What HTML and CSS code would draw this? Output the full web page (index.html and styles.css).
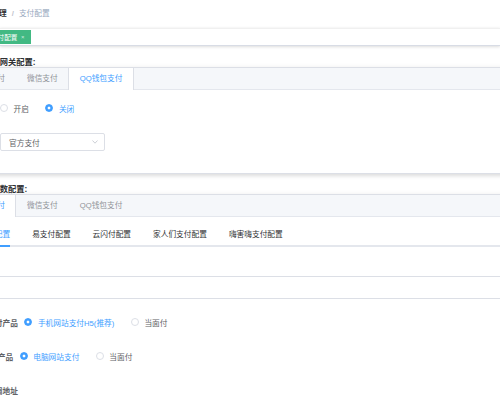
FILE: index.html
```html
<!DOCTYPE html>
<html lang="zh-CN">
<head>
  <meta charset="UTF-8" />
  <title>支付配置</title>
  <link rel="stylesheet" href="styles.css">
</head>
<body>
  <div class="navbar">
    <div class="breadcrumb">
      <span class="crumb-link">支付管理</span><span class="crumb-sep">/</span><span class="crumb-current">支付配置</span>
    </div>
  </div>
  <div class="tags-view">
    <span class="tag">支付配置<span class="tag-close">×</span></span>
  </div>

  <div class="app-main">
    <!-- 网关 -->
    <div class="section-title">第三方网关配置:</div>
    <div class="tabs-card">
      <div class="tabs-head">
        <div class="tab-item">支付宝支付</div>
        <div class="tab-item">微信支付</div>
        <div class="tab-item active">QQ钱包支付</div>
      </div>
      <div class="tabs-body">
        <div class="form-row">
          <div class="form-label fixed">状态</div>
          <label class="radio"><span class="radio-dot"></span><span class="radio-text">开启</span></label>
          <label class="radio checked"><span class="radio-dot"></span><span class="radio-text">关闭</span></label>
        </div>
        <div class="form-row">
          <div class="form-label fixed">通道</div>
          <div class="select">
            <span>官方支付</span>
            <svg width="6" height="4" viewBox="0 0 6 4"><polyline points="0.5,0.5 3,3.2 5.5,0.5" fill="none" stroke="#c0c4cc" stroke-width="0.8"/></svg>
          </div>
        </div>
      </div>
    </div>

    <!-- 参数 -->
    <div class="section-title second">支付参数配置:</div>
    <div class="tabs-card">
      <div class="tabs-head">
        <div class="tab-item active">支付宝支付</div>
        <div class="tab-item">微信支付</div>
        <div class="tab-item">QQ钱包支付</div>
      </div>
      <div class="tabs-body">
        <div class="line-tabs">
          <div class="line-tab active"><span>官方支付配置</span></div>
          <div class="line-tab"><span>易支付配置</span></div>
          <div class="line-tab"><span>云闪付配置</span></div>
          <div class="line-tab"><span>家人们支付配置</span></div>
          <div class="line-tab"><span>嗨害嗨支付配置</span></div>
        </div>
        <div class="wide-input"></div>
        <div class="form-row param-row">
          <div class="form-label">手机端支付产品</div>
          <label class="radio checked"><span class="radio-dot"></span><span class="radio-text">手机网站支付H5(推荐)</span></label>
          <label class="radio"><span class="radio-dot"></span><span class="radio-text">当面付</span></label>
        </div>
        <div class="form-row param-row">
          <div class="form-label">PC端支付产品</div>
          <label class="radio checked"><span class="radio-dot"></span><span class="radio-text">电脑网站支付</span></label>
          <label class="radio"><span class="radio-dot"></span><span class="radio-text">当面付</span></label>
        </div>
        <div class="form-row param-row">
          <div class="form-label">支付宝回调地址</div>
        </div>
      </div>
    </div>
  </div>
</body>
</html>
```

FILE: styles.css
```css
html, body {
  margin: 0;
  overflow: hidden;
  background: #fff;
}
body {
  width: 500px;
  height: 400px;
  font-family: "Liberation Sans", "Noto Sans CJK SC", sans-serif;
  font-size: 7.7px;
  color: #606266;
}

/* 顶部 */
.navbar {
  height: 28px;
  line-height: 27px;
  white-space: nowrap;
}
.breadcrumb {
  margin-left: -24px;
}
.crumb-link {
  color: #303133;
  font-weight: 700;
}
.crumb-sep {
  margin: 0 5px;
  color: #c0c4cc;
  font-weight: 700;
}
.crumb-current {
  color: #97a8be;
}
.tags-view {
  height: 16px;
  border-top: 1px solid #f0f0f0;
  border-bottom: 1px solid #d8dce5;
  box-shadow: 0 1px 3px 0 rgba(0, 0, 0, .12), 0 0 3px 0 rgba(0, 0, 0, .04);
  white-space: nowrap;
}
.tag {
  display: inline-flex;
  align-items: center;
  height: 14px;
  margin: 1px 0 0 -13px;
  padding: 0 4px;
  background: #42b983;
  color: #fff;
  font-size: 6.6px;
}
.tag-close {
  width: 9px;
  margin-left: 1px;
  text-align: center;
  font-size: 6px;
  color: rgba(255, 255, 255, .75);
}

/* 内容 */
.app-main {
  width: 800px;
  margin-left: -45px;
  padding-top: 12px;
}
.section-title {
  height: 9px;
  line-height: 9px;
  padding-left: 20px;
  font-size: 8.25px;
  font-weight: 700;
  color: #303133;
  white-space: nowrap;
}
.section-title.second {
  margin-top: 11px;
}
.tabs-card {
  border: 1px solid #dcdfe6;
  background: #fff;
  box-shadow: 0 2px 4px 0 rgba(0, 0, 0, .12), 0 0 6px 0 rgba(0, 0, 0, .04);
}
.tabs-head {
  display: flex;
  background: #f5f7fa;
  border-bottom: 1px solid #e4e7ed;
}
.tab-item {
  height: 22px;
  line-height: 22px;
  box-sizing: border-box;
  margin: 0 0 -1px -1px;
  padding: 0 10.5px;
  border-left: 1px solid transparent;
  border-right: 1px solid transparent;
  color: #909399;
  white-space: nowrap;
}
.tab-item.active {
  background: #fff;
  color: #409eff;
  border-left-color: #dcdfe6;
  border-right-color: #dcdfe6;
}
.tabs-body {
  padding: 7px 8px 8px;
}

/* 表单 */
.form-row {
  display: flex;
  align-items: center;
  height: 22px;
  margin-bottom: 12px;
  white-space: nowrap;
}
.form-label {
  flex: none;
  padding-right: 6.6px;
  font-weight: 700;
  color: #606266;
}
.form-label.fixed {
  width: 36px;
  box-sizing: border-box;
  text-align: right;
}
.radio {
  display: inline-flex;
  align-items: center;
  margin-right: 16.5px;
  color: #606266;
}
.radio-dot {
  width: 8px;
  height: 8px;
  box-sizing: border-box;
  border: 1px solid #dcdfe6;
  border-radius: 50%;
  background: #fff;
}
.radio.checked .radio-dot {
  border-color: #409eff;
  background: radial-gradient(circle, #fff 1.2px, #409eff 1.7px);
}
.radio-text {
  padding-left: 5.5px;
}
.radio.checked .radio-text {
  color: #409eff;
}
.select {
  display: flex;
  align-items: center;
  justify-content: space-between;
  width: 105px;
  height: 18px;
  box-sizing: border-box;
  padding: 0 6px 0 8px;
  border: 1px solid #dcdfe6;
  border-radius: 2px;
  color: #606266;
}

.line-tabs {
  display: flex;
  border-bottom: 2px solid #e4e7ed;
}
.line-tab {
  height: 21px;
  padding: 0 11px;
  color: #303133;
  white-space: nowrap;
}
.line-tab:first-child {
  padding-left: 0;
}
.line-tab span {
  display: block;
  line-height: 21px;
}
.line-tab.active {
  color: #409eff;
}
.line-tab.active span {
  border-bottom: 2px solid #409eff;
}
.wide-input {
  height: 23px;
  box-sizing: border-box;
  margin: 29px 0 12px;
  border: 1px solid #dcdfe6;
  border-radius: 2px;
}
```
